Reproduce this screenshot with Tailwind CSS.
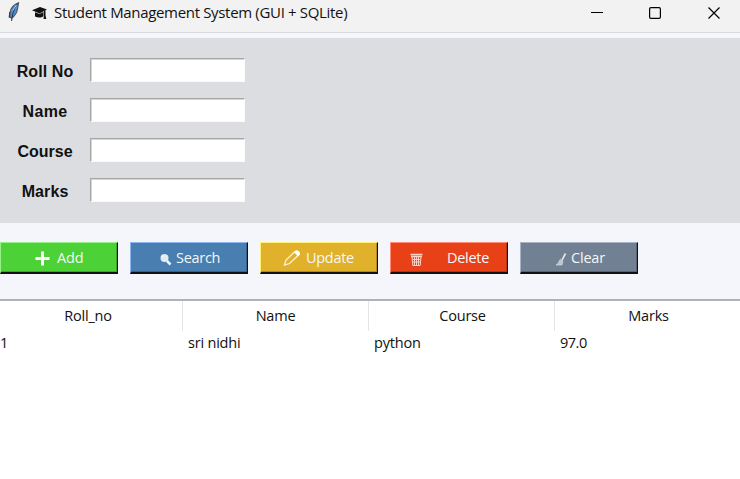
<!DOCTYPE html>
<html lang="en">
<head>
<meta charset="utf-8">
<title>Student Management System</title>
<script src="https://cdn.jsdelivr.net/npm/@tailwindcss/browser@4"></script>
</head>
<body class="flex h-[479px] w-[740px] flex-col overflow-hidden bg-[#f4f6fb] font-['Open_Sans','Noto_Sans',sans-serif] text-[#111]">
<header class="flex h-[33px] shrink-0 border-b border-[#dadbe0] bg-[#f2f2f2]">
  <svg class="ml-[7px] mt-[2px] h-[20px] w-[14px] shrink-0" viewBox="0 0 14 20">
    <path d="M11.500.8C7.500 2 3.500 6 2.800 11l-.6 4 2.600 1c3-2 5-5 5.700-9z" fill="#4f8fdc" stroke="#555" stroke-width="1.200"/>
    <path d="M10.800 1.500C8 5 5.500 10 4.600 19M2.800 10v5" fill="none" stroke="#333" stroke-width="1"/>
    <path d="M9.500 3 5.800 8.500" stroke="#a6d0f5" stroke-width="1"/>
  </svg>
  <svg class="ml-[11px] mt-[6px] h-[14px] w-[15px] shrink-0" viewBox="0 0 15 14" fill="#111">
    <path d="M0 4.200 8 1l7 2.600-7.500 3.900zM3 6.200l4.500 1.900L11.500 6v4.300c-2 1.700-6 1.700-8.500.2z"/>
    <path d="M12 4.500h1.500v5l.8 3.500h-2.800l.5-3.500z"/>
  </svg>
  <h1 class="ml-[7px] mt-[3px] w-[310px] whitespace-nowrap text-[15px] leading-[19px] tracking-[-0.33px]">Student Management System (GUI + SQLite)</h1>
  <div class="ml-auto mr-[19px] mt-[6px] flex h-[14px] gap-[44px]">
    <svg class="size-[14px] -translate-x-px" viewBox="0 0 14 14"><path d="M1 6.500h12" stroke="#000"/></svg>
    <svg class="size-[14px] -translate-x-px" viewBox="0 0 14 14"><rect x="1.600" y="1.600" width="10.800" height="10.800" rx="1.300" fill="none" stroke="#000" stroke-width="1.200"/></svg>
    <svg class="size-[14px]" viewBox="0 0 14 14"><path d="m1.500 1.500 11 11m0-11-11 11" stroke="#000" stroke-width="1.200"/></svg>
  </div>
</header>
<section class="mt-[5px] flex h-[185px] shrink-0 flex-col gap-4 bg-[#dcdde1] pt-5 font-['Liberation_Sans',Arial,sans-serif] text-base font-bold">
  <div class="flex h-6 items-center"><label class="mt-[4px] w-[90px] text-center tracking-[0.1px]">Roll No</label><div class="h-6 w-[155px] border border-[#fafafa] border-l-[#a7a7a7] border-t-[#a7a7a7] bg-white shadow-[inset_1px_1px_#d5d5d5]"></div></div>
  <div class="flex h-6 items-center"><label class="mt-[4px] w-[90px] text-center tracking-[0.3px]">Name</label><div class="h-6 w-[155px] border border-[#fafafa] border-l-[#a7a7a7] border-t-[#a7a7a7] bg-white shadow-[inset_1px_1px_#d5d5d5]"></div></div>
  <div class="flex h-6 items-center"><label class="mt-[4px] w-[90px] text-center tracking-[0px]">Course</label><div class="h-6 w-[155px] border border-[#fafafa] border-l-[#a7a7a7] border-t-[#a7a7a7] bg-white shadow-[inset_1px_1px_#d5d5d5]"></div></div>
  <div class="flex h-6 items-center"><label class="mt-[4px] w-[90px] text-center tracking-[0.1px]">Marks</label><div class="h-6 w-[155px] border border-[#fafafa] border-l-[#a7a7a7] border-t-[#a7a7a7] bg-white shadow-[inset_1px_1px_#d5d5d5]"></div></div>
</section>
<nav class="mt-[19px] flex h-[32px] shrink-0 gap-3 text-[14.500px] leading-[20px] text-[#f3f7fa]">
  <button class="flex w-[118px] border border-b-2 border-[#111] border-l-[#98f08b] border-t-[#98f08b] bg-[#4cd137] pl-[34px] pt-[5px] shadow-[inset_-1px_-1px_#3ba52c]">
    <svg class="mt-[3px] size-[15px]" viewBox="0 0 15 15"><path d="M7.500.5v14M.5 7.500h14" stroke="#fff" stroke-width="3"/></svg><span class="ml-[7px] tracking-[-0.1px]">Add</span></button>
  <button class="flex w-[118px] border border-b-2 border-[#111] border-l-[#91b5ee] border-t-[#91b5ee] bg-[#487eb0] pl-[28px] pt-[5px] shadow-[inset_-1px_-1px_#38628a]">
    <svg class="mt-[5px] size-[13px]" viewBox="0 0 13 13"><circle cx="5.500" cy="5" r="4" fill="#e2ecf5"/><path d="m8 8 3.500 3.500" stroke="#f3f8ff" stroke-width="2.500"/><path d="m3 4 2-1.500" stroke="#fff"/></svg><span class="ml-[4px] tracking-[-0.3px]">Search</span></button>
  <button class="flex w-[118px] border border-b-2 border-[#111] border-l-[#fff07a] border-t-[#fff07a] bg-[#e1b12c] pl-[22px] pt-[5px] shadow-[inset_-1px_-1px_#b08a22]">
    <svg class="mt-[1px] h-[18px] w-[18px]" viewBox="0 0 18 17"><path d="m1.500 15.500 1.500-5 9-8.500c2-1.500 5 1 3.500 3.500l-9 8.500z" fill="none" stroke="#fff3d2" stroke-width="1.300"/><path d="m11 2.800 4 4 2-2c.5-2-1.500-4-3.500-3.500z" fill="#fff"/></svg><span class="ml-[5px] tracking-[-0.3px]">Update</span></button>
  <button class="flex w-[118px] border border-b-2 border-[#111] border-l-[#ff8b76] border-t-[#ff8b76] bg-[#e84118] pl-[19px] pt-[5px] shadow-[inset_-1px_-1px_#b63313]">
    <svg class="mt-[5px] h-[14px] w-[13px]" viewBox="0 0 13 14" fill="none" stroke="#ffd0c5"><path d="M.5 1.500h12M1 3.500h11" stroke-width="1.500"/><path d="m2 4 .8 8.500h7.400L11 4M4.500 4v8M6.500 4v8M8.500 4v8M2.500 6.500h8M3 9h7"/></svg><span class="ml-[24px] tracking-[-0.3px]">Delete</span></button>
  <button class="flex w-[118px] border border-b-2 border-[#111] border-l-[#a6b4c5] border-t-[#a6b4c5] bg-[#718093] pl-[34px] pt-[5px] shadow-[inset_-1px_-1px_#586473]">
    <svg class="mt-[5px] h-[13px] w-[12px]" viewBox="0 0 12 13"><path d="M10.500.5 7 7" stroke="#e7e9ec" stroke-width="1.600"/><path d="M5 6.500 8 8l-1 4H1l2-1.500z" fill="#bdc6d0" stroke="#d8dce1" stroke-width=".6"/></svg><span class="ml-[4px] tracking-[-0.2px]">Clear</span></button>
</nav>
<main class="mt-[25px] flex-1 border-t-2 border-[#b0b1b8] bg-white text-[14.500px] leading-[20px]">
  <div class="grid h-[30px] grid-cols-[183px_186px_186px_185px] text-center">
    <div class="border-r border-[#e5e5e5] pr-[6px] pt-[5px] tracking-[-0.2px]">Roll_no</div>
    <div class="border-r border-[#e5e5e5] pt-[5px] tracking-[-0.2px]">Name</div>
    <div class="border-r border-[#e5e5e5] pt-[5px] pl-[2px] tracking-[-0.2px]">Course</div>
    <div class="pt-[5px] pl-[2px] tracking-[-0.2px]">Marks</div>
  </div>
  <div class="grid grid-cols-[182px_186px_186px_186px] pt-[2px]">
    <div>1</div><div class="pl-[6px] tracking-[-0.2px]">sri nidhi</div><div class="pl-[6px] tracking-[-0.2px]">python</div><div class="pl-[6px] tracking-[-0.5px]">97.0</div>
  </div>
</main>
</body>
</html>
